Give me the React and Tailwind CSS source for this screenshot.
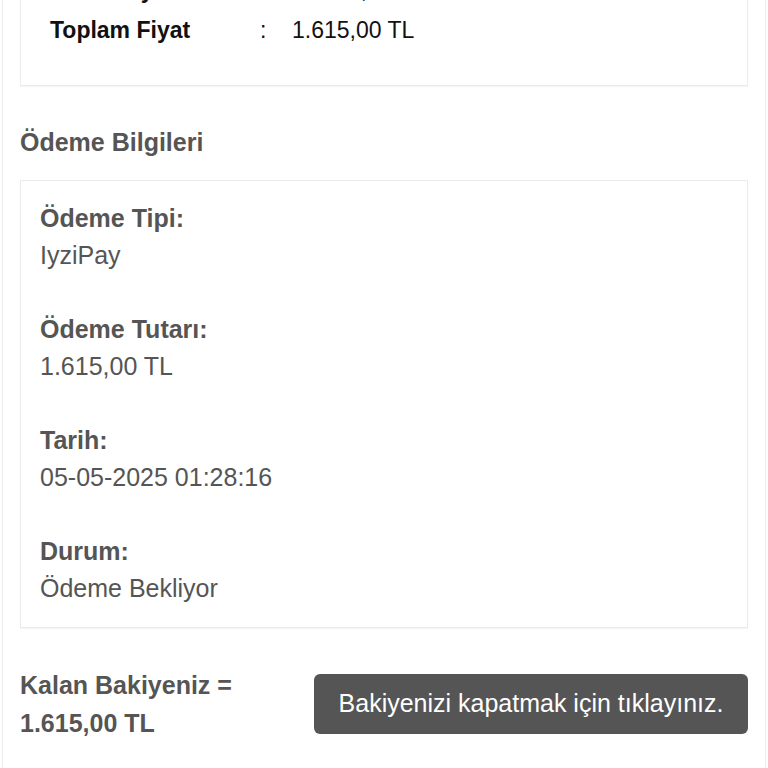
import React from "react";

export default function App() {
  const items = [
    ["Ödeme Tipi:", "IyziPay"],
    ["Ödeme Tutarı:", "1.615,00 TL"],
    ["Tarih:", "05-05-2025 01:28:16"],
    ["Durum:", "Ödeme Bekliyor"],
  ];
  return (
    <div className="w-[768px] h-[768px] overflow-hidden bg-white font-['Liberation_Sans',Arial,sans-serif]">
      <div className="mx-[2px] h-full flex flex-col border-x border-[#ededed] px-[17px]">
        <div className="-mt-[51px] border border-[#ebebeb] shadow-[0_1px_1px_rgba(0,0,0,0.04)] pl-[29px] pt-[20px] pb-[35px]">
          <div className="flex h-[40px] items-center text-[23px] text-[#111]">
            <div className="w-[210px] font-bold">Genel Fiyat</div>
            <div className="w-[32px]">:</div>
            <div>11.615,00 TL</div>
          </div>
          <div className="flex h-[40px] items-center text-[23px] text-[#111]">
            <div className="w-[210px] font-bold">Toplam Fiyat</div>
            <div className="w-[32px]">:</div>
            <div>1.615,00 TL</div>
          </div>
        </div>

        <div className="mt-[41px] h-[30px] leading-[30px] text-[25px] font-bold text-[#555]">
          Ödeme Bilgileri
        </div>

        <div className="mt-[23px] border border-[#ebebeb] shadow-[0_1px_1px_rgba(0,0,0,0.04)] pl-[19px] pt-[19px] pb-[20px] flex flex-col gap-[37px]">
          {items.map(([k, v]) => (
            <div key={k} className="text-[25px] leading-[37px] text-[#555]">
              <div className="font-bold">{k}</div>
              <div>{v}</div>
            </div>
          ))}
        </div>

        <div className="mt-[38px] flex items-center justify-between">
          <div className="text-[25px] leading-[38px] font-bold text-[#555]">
            <div>Kalan Bakiyeniz =</div>
            <div>1.615,00 TL</div>
          </div>
          <div className="flex h-[60px] w-[434px] items-center justify-center rounded-[6px] bg-[#555] text-[25px] text-white">
            Bakiyenizi kapatmak için tıklayınız.
          </div>
        </div>
      </div>
    </div>
  );
}
